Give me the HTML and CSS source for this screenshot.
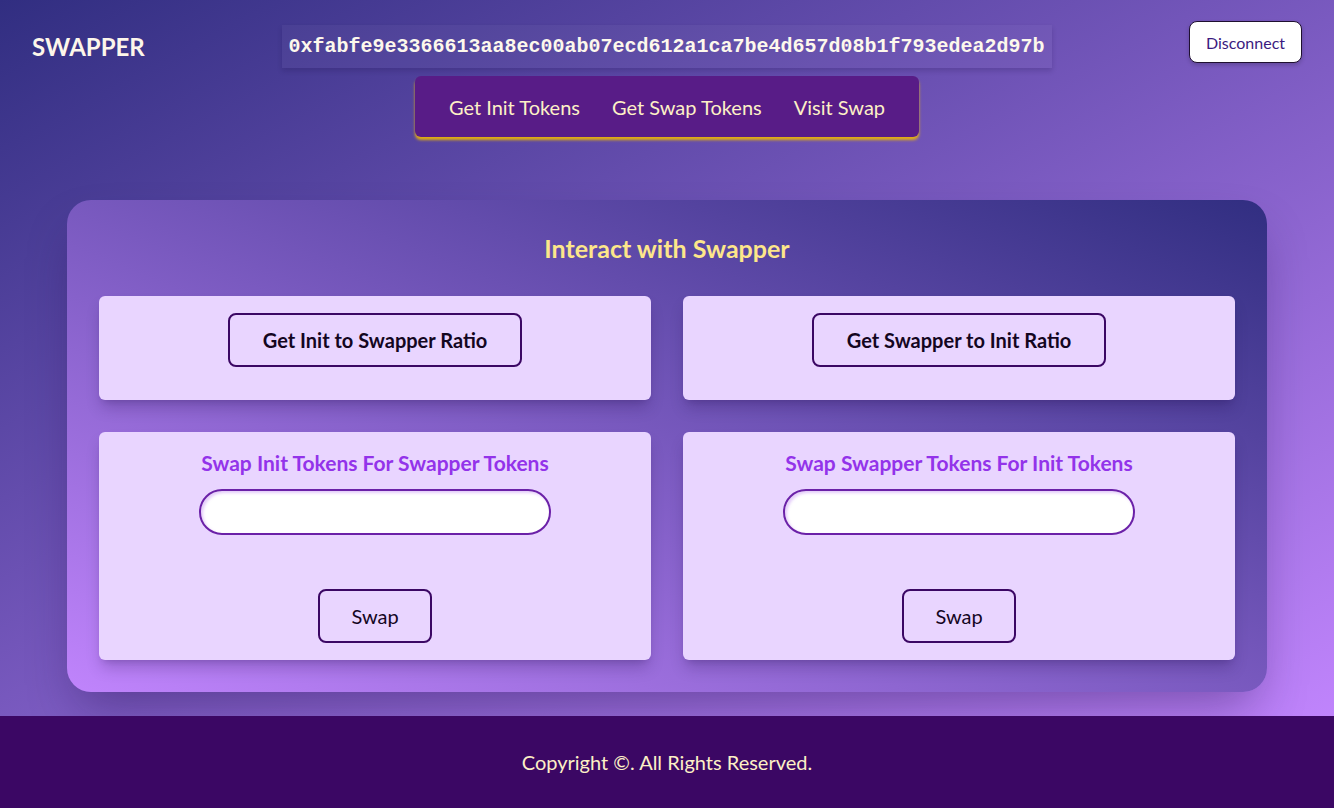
FILE: index.html
```html
<!DOCTYPE html>
<html lang="en">
<head>
<meta charset="utf-8">
<title>Swapper</title>
<link rel="stylesheet" href="styles.css">
</head>
<body>
<div class="page">
  <header class="header">
    <div class="brand">SWAPPER</div>
    <div class="address">0xfabfe9e3366613aa8ec00ab07ecd612a1ca7be4d657d08b1f793edea2d97b</div>
    <div class="header-right"><button class="disconnect">Disconnect</button></div>
  </header>
  <nav class="nav">
    <a class="nav-link" href="#">Get Init Tokens</a>
    <a class="nav-link" href="#">Get Swap Tokens</a>
    <a class="nav-link" href="#">Visit Swap</a>
  </nav>
  <main class="main">
    <section class="panel">
      <h2 class="panel-title">Interact with Swapper</h2>
      <div class="grid">
        <div class="card card-ratio">
          <button class="btn btn-bold">Get Init to Swapper Ratio</button>
        </div>
        <div class="card card-ratio">
          <button class="btn btn-bold">Get Swapper to Init Ratio</button>
        </div>
        <div class="card card-swap">
          <h3 class="swap-title">Swap Init Tokens For Swapper Tokens</h3>
          <input class="swap-input" type="text">
          <button class="btn btn-swap">Swap</button>
        </div>
        <div class="card card-swap">
          <h3 class="swap-title">Swap Swapper Tokens For Init Tokens</h3>
          <input class="swap-input" type="text">
          <button class="btn btn-swap">Swap</button>
        </div>
      </div>
    </section>
  </main>
</div>
<footer class="footer">Copyright ©. All Rights Reserved.</footer>
</body>
</html>
```
FILE: styles.css
```css
* { box-sizing: border-box; }
html, body { margin: 0; padding: 0; }
body {
  font-family: Lato, "Open Sans", sans-serif;
  background: #3b0764;
  min-height: 808px;
}
.page {
  background: linear-gradient(to bottom right, #312e81, #c084fc);
  padding-bottom: 24px;
}
.header {
  display: grid;
  grid-template-columns: 1fr auto 1fr;
  align-items: start;
  padding: 21px 32px 0;
}
.brand {
  margin-top: 11px;
  font-size: 24px;
  line-height: 30px;
  font-weight: 700;
  color: #fdf6ea;
}
.address {
  margin-top: 4px;
  height: 43px;
  padding: 0 7px 0 6px;
  display: flex;
  align-items: center;
  font-family: "Liberation Mono", monospace;
  font-weight: 700;
  font-size: 20px;
  color: #fdf8ec;
  background: rgba(255, 255, 255, 0.04);
  box-shadow: 0 3px 5px rgba(20, 10, 60, 0.18);
}
.header-right {
  display: flex;
  justify-content: flex-end;
}
.disconnect {
  width: 113px;
  height: 42px;
  font-family: Lato, "Open Sans", sans-serif;
  font-size: 16px;
  color: #3b1a80;
  background: #fff;
  border: 1px solid #1f1030;
  border-radius: 8px;
  box-shadow: 0 2px 4px rgba(0, 0, 0, 0.2);
}
.nav {
  margin: 8px auto 0;
  width: max-content;
  height: 61px;
  display: flex;
  align-items: center;
  gap: 32px;
  padding: 0 34px;
  background: #581c87;
  border-radius: 6px;
  box-shadow: 0 3px 3px rgba(234, 179, 8, 0.95);
}
.nav-link {
  color: #fdf0c6;
  text-decoration: none;
  font-size: 20px;
}
.main {
  padding: 63px 67px 0;
}
.panel {
  background: linear-gradient(to bottom left, #312e81, #c084fc);
  border-radius: 24px;
  padding: 32px;
  box-shadow: 0 25px 50px -12px rgba(30, 10, 70, 0.4);
}
.panel-title {
  margin: 0 0 32px;
  text-align: center;
  font-size: 25px;
  line-height: 32px;
  font-weight: 700;
  color: #fde68a;
}
.grid {
  display: grid;
  grid-template-columns: 1fr 1fr;
  grid-template-rows: 104px 228px;
  gap: 32px;
}
.card {
  background: #e9d5ff;
  border-radius: 6px;
  box-shadow: 0 10px 15px -3px rgba(30, 10, 70, 0.25), 0 4px 6px -4px rgba(30, 10, 70, 0.2);
  display: flex;
  flex-direction: column;
  align-items: center;
}
.card-ratio { padding-top: 17px; }
.card-swap { padding: 16px 0 17px; }
.btn {
  font-family: Lato, "Open Sans", sans-serif;
  background: transparent;
  border: 2px solid #3b0764;
  border-radius: 8px;
  color: #14061f;
  height: 54px;
}
.btn-bold {
  width: 294px;
  font-size: 20px;
  font-weight: 700;
}
.btn-swap {
  width: 114px;
  margin-top: 54px;
  font-size: 20px;
}
.swap-title {
  margin: 0;
  font-size: 21px;
  line-height: 30px;
  font-weight: 700;
  color: #9333ea;
}
.swap-input {
  margin-top: 11px;
  width: 352px;
  height: 46px;
  border: 2px solid #6b21a8;
  border-radius: 23px;
  background: #fff;
  box-shadow: inset 2px 2px 3px rgba(147, 51, 234, 0.25);
  outline: none;
}
.footer {
  height: 92px;
  display: flex;
  align-items: center;
  justify-content: center;
  background: #3b0764;
  color: #fdf0c6;
  font-size: 20px;
}
```
